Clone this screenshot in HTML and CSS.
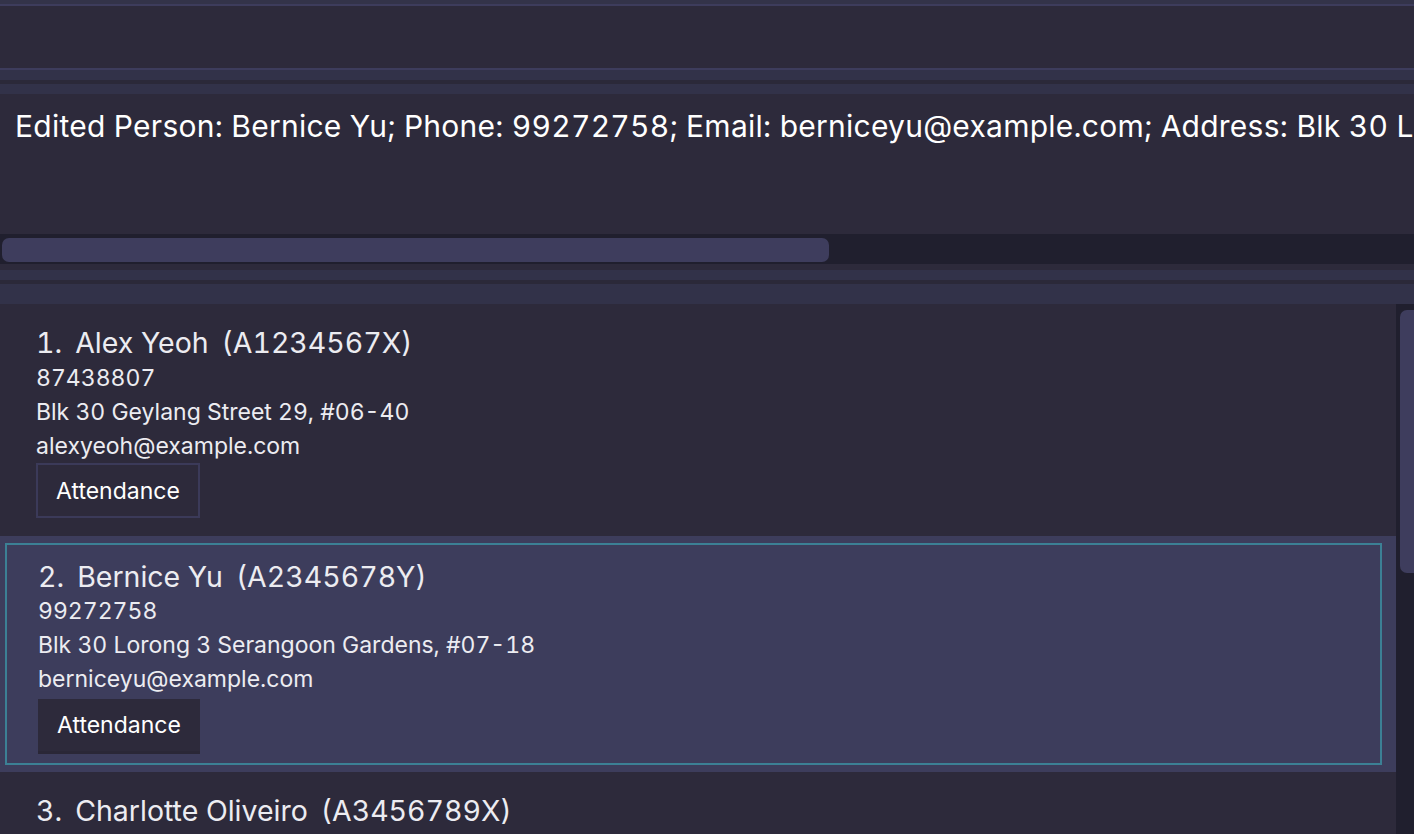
FILE: index.html
```html
<!DOCTYPE html>
<html>
<head>
<meta charset="utf-8">
<link rel="stylesheet" href="styles.css">
</head>
<body>
<div class="app">
  <div class="menubar"></div>
  <div class="command-box"></div>
  <div class="divider"><div class="band"></div><div class="gap"></div><div class="band"></div></div>
  <div class="result">
    <div class="result-text">Edited Person: Bernice Yu; Phone: 99272758; Email: berniceyu@example.com; Address: Blk 30 Lorong 3 Serangoon Gardens, #07-18; Matric: A2345678Y</div>
    <div class="hscroll"><div class="hthumb"></div></div>
  </div>
  <div class="divider divider-lower"><div class="band"></div><div class="gap"></div><div class="band band-tall"></div></div>
  <div class="list-wrap">
    <div class="list">
      <div class="cell">
        <div class="card">
          <div class="name-row"><span>1.</span><span>Alex Yeoh</span><span>(A1234567X)</span></div>
          <div class="line">87438807</div>
          <div class="line">Blk 30 Geylang Street 29, #06-40</div>
          <div class="line">alexyeoh@example.com</div>
          <div class="tag">Attendance</div>
        </div>
      </div>
      <div class="cell cell-selected">
        <div class="card">
          <div class="name-row"><span>2.</span><span>Bernice Yu</span><span>(A2345678Y)</span></div>
          <div class="line">99272758</div>
          <div class="line">Blk 30 Lorong 3 Serangoon Gardens, #07-18</div>
          <div class="line">berniceyu@example.com</div>
          <div class="tag">Attendance</div>
        </div>
      </div>
      <div class="cell">
        <div class="card">
          <div class="name-row"><span>3.</span><span>Charlotte Oliveiro</span><span>(A3456789X)</span></div>
          <div class="line">93210283</div>
          <div class="line">Blk 11 Ang Mo Kio Street 74, #11-04</div>
          <div class="line">charlotte@example.com</div>
          <div class="tag">Attendance</div>
        </div>
      </div>
    </div>
    <div class="vscroll"><div class="vthumb"></div></div>
  </div>
</div>
</body>
</html>
```

FILE: styles.css
```css
html, body {
  margin: 0;
  padding: 0;
  background: #2d2a3b;
  overflow: hidden;
}

.app {
  width: 1414px;
  height: 834px;
  display: flex;
  flex-direction: column;
  font-family: Inter, "Noto Sans", sans-serif;
  font-variant-numeric: tabular-nums;
  color: #ffffff;
  overflow: hidden;
}

.menubar {
  height: 4px;
  background: #333349;
  border-bottom: 2px solid #3d3c5c;
  flex: none;
}

.command-box {
  height: 62px;
  background: #2d2a3b;
  border-bottom: 2px solid #3d3c5c;
  flex: none;
}

.divider {
  display: flex;
  flex-direction: column;
  flex: none;
}

.divider .band {
  height: 10px;
  background: #323249;
}

.divider .gap {
  height: 4px;
  background: #2b2939;
}

.divider-lower {
  padding-top: 6px;
  background: #2d2a3b;
}

.divider .band-tall {
  height: 20px;
}

.result {
  height: 170px;
  display: flex;
  flex-direction: column;
  background: #2d2a3b;
  flex: none;
}

.result-text {
  flex: 1;
  padding: 12px 0 0 15px;
  font-size: 30px;
  line-height: 40px;
  letter-spacing: 0.25px;
  white-space: nowrap;
  overflow: hidden;
  color: #ffffff;
}

.hscroll {
  height: 30px;
  background: #201f2e;
  padding: 4px 0 2px 2px;
  box-sizing: border-box;
}

.hthumb {
  width: 827px;
  height: 24px;
  background: #3e3d5d;
  border-radius: 7px;
}

.list-wrap {
  flex: 1;
  display: flex;
  min-height: 0;
}

.list {
  flex: 1;
  display: flex;
  flex-direction: column;
  overflow: hidden;
}

.cell {
  padding: 7px 14px 7px 5px;
  background: #2d2a3b;
  flex: none;
}

.card {
  border: 2px solid transparent;
  padding: 12px 0 9px 29px;
  color: #ececf1;
}

.name-row {
  display: flex;
  gap: 13px;
  font-size: 28.5px;
  line-height: 36px;
  height: 36px;
  white-space: nowrap;
}

.line {
  font-size: 23px;
  line-height: 34px;
  height: 34px;
  white-space: nowrap;
}

.tag {
  display: inline-flex;
  align-items: center;
  height: 55px;
  box-sizing: border-box;
  padding: 0 18px;
  border: 2px solid #3b3a59;
  font-size: 23px;
  color: #ffffff;
}

.cell-selected {
  background: #3d3d5c;
}

.cell-selected .card {
  border-color: #3c8095;
  padding: 15px 0 9px 31px;
}

.cell-selected .name-row {
  height: 34px;
  line-height: 34px;
}

.cell-selected .tag {
  margin-top: 3px;
  height: 52px;
  border: none;
  padding: 0 19px;
  background: #2d2a3b;
  box-shadow: 0 3px 0 #2a2737;
  margin-bottom: 3px;
}

.vscroll {
  width: 18px;
  background: #201f2e;
  padding: 6px 0 0 4px;
  box-sizing: border-box;
  flex: none;
}

.vthumb {
  width: 20px;
  height: 263px;
  background: #3e3d5d;
  border-radius: 7px;
}
```
